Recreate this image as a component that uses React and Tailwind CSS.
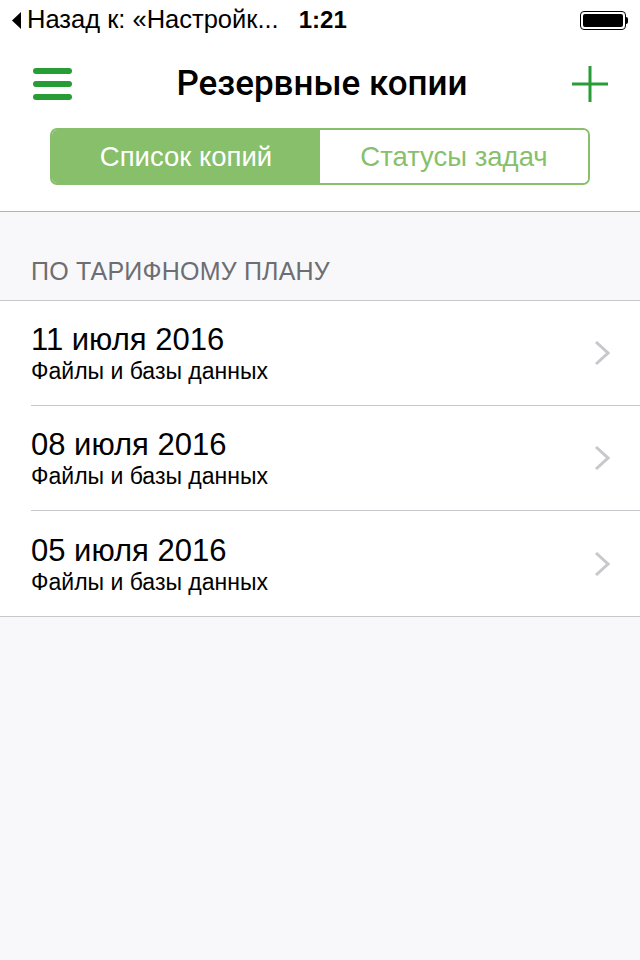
const BACKUPS = [
  { date: '11 июля 2016', kind: 'Файлы и базы данных' },
  { date: '08 июля 2016', kind: 'Файлы и базы данных' },
  { date: '05 июля 2016', kind: 'Файлы и базы данных' },
];

function StatusBar() {
  return (
    <div className="h-[40px] flex items-center px-[12px] text-black">
      <svg width="9" height="17" viewBox="0 0 9 17" className="mr-[6px]">
        <polygon points="9,0 9,17 0,8.5" fill="#000" />
      </svg>
      <span className="text-[25.5px] leading-none">Назад к: «Настройк...</span>
      <span className="text-[24px] leading-none font-bold ml-[20px]">1:21</span>
      <div className="flex-1" />
      <div className="flex items-center">
        <div className="w-[46px] h-[19px] rounded-[4px] border-[1.5px] border-black p-[2px]">
          <div className="w-full h-full bg-black rounded-[2px]" />
        </div>
        <div className="w-[2px] h-[7px] bg-black rounded-r-sm" />
      </div>
    </div>
  );
}

export default function App() {
  return (
    <div className="w-[640px] h-[960px] flex flex-col bg-[#f8f8fa]"
      style={{ fontFamily: '"Liberation Sans", "Noto Sans", sans-serif' }}>
      <div className="bg-white">
        <StatusBar />

        {/* ── навигация ── */}
        <div className="h-[88px] flex items-center justify-between px-[33px]">
          <div className="flex flex-col gap-[7px] w-[39px]">
            <div className="h-[6px] rounded-full bg-[#289c35]" />
            <div className="h-[6px] rounded-full bg-[#289c35]" />
            <div className="h-[6px] rounded-full bg-[#289c35]" />
          </div>
          <span className="text-[35px] font-medium text-black"
            style={{ fontFamily: 'Roboto, "Liberation Sans", sans-serif' }}>Резервные копии</span>
          <svg width="36" height="36" viewBox="0 0 36 36" className="mr-[-1px]">
            <path d="M18 0V36M0 18H36" stroke="#289c35" strokeWidth="3" />
          </svg>
        </div>

        {/* ── сегменты ── */}
        <div className="px-[50px] pb-[26px]">
          <div className="h-[57px] flex rounded-[7px] border-2 border-[#88bf6a] overflow-hidden">
            <div className="flex-1 bg-[#88bf6a] flex items-center justify-center text-white text-[27.5px]">
              Список копий
            </div>
            <div className="flex-1 bg-white flex items-center justify-center text-[#88bf6a] text-[27.5px]">
              Статусы задач
            </div>
          </div>
        </div>
      </div>
      <div className="h-px bg-[#b2b2b2]" />

      <div className="pt-[47px] pb-[16px] px-[31px] text-[25px] text-[#6d6d72] leading-none tracking-[0.2px]">
        ПО ТАРИФНОМУ ПЛАНУ
      </div>

      <div className="bg-white border-t border-b border-[#c8c7cc]">
        {BACKUPS.map((b, i) => (
          <div key={i} className="pl-[31px]">
            <div className={'h-[105px] flex items-center pr-[30px] ' + (i < BACKUPS.length - 1 ? 'border-b border-[#c8c7cc]' : '')}>
              <div className="flex-1 flex flex-col">
                <span className="text-[31px] leading-[36px] text-black">{b.date}</span>
                <span className="text-[23px] leading-[26px] text-black">{b.kind}</span>
              </div>
              <svg width="16" height="26" viewBox="0 0 16 26">
                <polyline points="2,2 14,13 2,24" fill="none" stroke="#c7c7cc" strokeWidth="3" />
              </svg>
            </div>
          </div>
        ))}
      </div>
    </div>
  );
}
